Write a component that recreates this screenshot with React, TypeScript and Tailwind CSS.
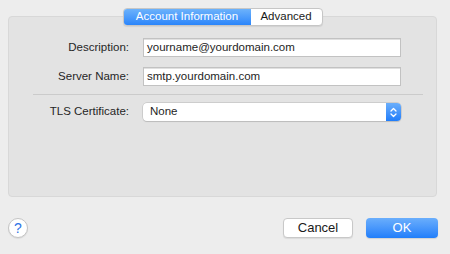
const font = { fontFamily: '"Liberation Sans", Arial, sans-serif' };

function Field({ label, value }: { label: string; value: string }) {
  return (
    <>
      <div className="text-right text-[11.5px] text-[#262626]">{label}</div>
      <div className="flex h-[19px] items-center border border-[#c2c2c2] bg-white pl-[3px] text-[11.5px] text-[#1e1e1e] shadow-[inset_0_1px_0_#e0e0e0]">
        {value}
      </div>
    </>
  );
}

function Stepper() {
  return (
    <div className="flex w-[15px] items-center justify-center rounded-r-[4px] bg-gradient-to-b from-[#6aaefb] to-[#1f7dfa]">
      <svg width="7" height="11" viewBox="0 0 7 11" fill="none" stroke="white" strokeWidth="1.3" strokeLinecap="round" strokeLinejoin="round">
        <path d="M1 4 L3.5 1.5 L6 4" />
        <path d="M1 7 L3.5 9.5 L6 7" />
      </svg>
    </div>
  );
}

export default function App() {
  return (
    <div className="flex h-[254px] w-[450px] flex-col bg-[#ededed] pt-[8px]" style={font}>
      <div className="relative z-10 mx-[8px] flex w-[429px] justify-center">
        <div className="flex h-[18px] overflow-hidden rounded-[4px] border border-[#c6c6c6] bg-white text-[11.5px] shadow-[0_1px_1px_rgba(0,0,0,0.08)]">
          <div className="flex w-[127px] items-center justify-center bg-gradient-to-b from-[#6cb2fb] to-[#2a85fb] text-white">
            Account Information
          </div>
          <div className="flex w-[71px] items-center justify-center text-[#1a1a1a]">Advanced</div>
        </div>
      </div>

      <div className="mx-[8px] -mt-[10px] flex h-[181px] w-[429px] flex-col rounded-[4px] border border-[#d8d8d8] bg-[#e3e3e3] pt-[21px]">
        <div className="grid grid-cols-[120px_258px] items-center gap-x-[14px] gap-y-[10px]">
          <Field label="Description:" value="yourname@yourdomain.com" />
          <Field label="Server Name:" value="smtp.yourdomain.com" />
        </div>

        <div className="ml-[24px] mr-[13px] mt-[8px] h-px bg-[#cbcbcb]" />

        <div className="mt-[8px] grid grid-cols-[120px_258px] items-center gap-x-[14px]">
          <div className="text-right text-[11.5px] text-[#262626]">TLS Certificate:</div>
          <div className="flex h-[18px] rounded-[4px] bg-white shadow-[0_0_0_0.5px_#b8b8b8,0_1px_1px_rgba(0,0,0,0.15)]">
            <div className="flex flex-1 items-center pl-[7px] text-[11.5px] text-[#1e1e1e]">None</div>
            <Stepper />
          </div>
        </div>
      </div>

      <div className="mt-[21px] flex items-center pl-[8px] pr-[12px]">
        <div className="flex h-[20px] w-[20px] items-center justify-center rounded-full border border-[#c4c4c4] bg-white text-[14px] text-[#2f74e6] shadow-[0_1px_1px_rgba(0,0,0,0.08)]">
          ?
        </div>
        <div className="ml-auto flex gap-[13px]">
          <div className="flex h-[20px] w-[70px] items-center justify-center rounded-[4px] border border-[#c8c8c8] bg-white text-[13px] text-[#1a1a1a] shadow-[0_1px_1px_rgba(0,0,0,0.08)]">
            Cancel
          </div>
          <div className="flex h-[20px] w-[72px] items-center justify-center rounded-[4px] bg-gradient-to-b from-[#6aaefc] to-[#1f7efa] text-[13px] text-white shadow-[0_1px_1px_rgba(0,0,0,0.12)]">
            OK
          </div>
        </div>
      </div>
    </div>
  );
}
